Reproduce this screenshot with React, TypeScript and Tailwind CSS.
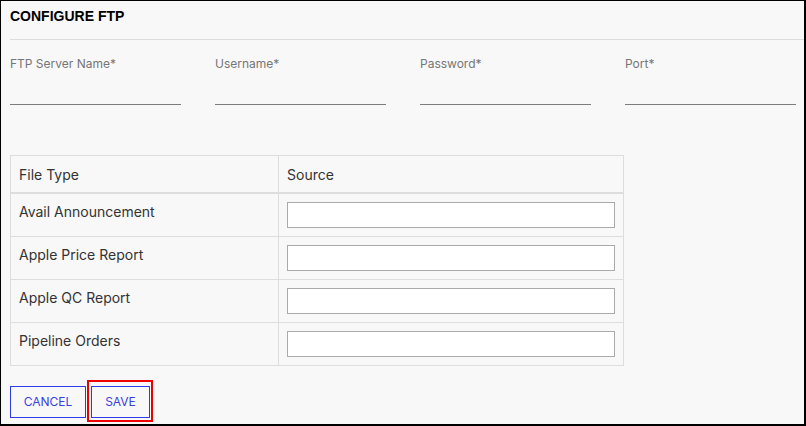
import React from "react";

const fields = ["FTP Server Name*", "Username*", "Password*", "Port*"];

const fileTypes = [
  "Avail Announcement",
  "Apple Price Report",
  "Apple QC Report",
  "Pipeline Orders",
];

export default function App() {
  return (
    <div className="w-[806px] h-[426px] bg-[#f8f8f8] border-t border-l border-r-2 border-b-2 border-black font-['Inter',sans-serif] flex flex-col">
      {/* Title */}
      <div className="h-[38px] pl-[9px] pt-[7px]">
        <h1 className="font-['Liberation_Sans',Arial,sans-serif] font-bold text-[14px] leading-[16px] text-black">
          CONFIGURE FTP
        </h1>
      </div>
      <div className="ml-[9px] border-b border-[#dcdcdc]" />

      {/* Connection fields */}
      <div className="ml-[9px] mt-[16px] w-[786px] grid grid-cols-4 gap-x-[34px]">
        {fields.map((label) => (
          <div key={label} className="flex flex-col">
            <label className="text-[12px] leading-[16px] text-[#767676]">{label}</label>
            <input
              type="text"
              className="h-[33px] w-full bg-transparent border-b border-[#7c7c7c] outline-none text-[13px]"
            />
          </div>
        ))}
      </div>

      {/* File type table */}
      <div className="ml-[9px] mt-[50px] w-[614px] border border-[#dddddd] text-[14px] text-[#333333]">
        <div className="h-[38px] flex border-b-2 border-[#dddddd]">
          <div className="w-[268px] border-r border-[#dddddd] pl-2 flex items-center">File Type</div>
          <div className="flex-1 pl-2 flex items-center">Source</div>
        </div>
        {fileTypes.map((type) => (
          <div
            key={type}
            className="h-[43px] flex border-b border-[#dddddd] last:border-b-0 last:h-[42px]"
          >
            <div className="w-[268px] border-r border-[#dddddd] pl-2 pt-[8px] leading-[20px]">
              {type}
            </div>
            <div className="flex-1 pl-2 pt-[8px]">
              <input
                type="text"
                className="w-[328px] h-[26px] bg-white border border-[#aaaaaa] outline-none px-1 text-[13px]"
              />
            </div>
          </div>
        ))}
      </div>

      {/* Actions */}
      <div className="ml-[9px] mt-[14px] flex items-start gap-[1px]">
        <button className="mt-[6px] w-[76px] h-[32px] border border-[#2f3be6] text-[#3b3fe0] text-[12px] leading-none uppercase">
          Cancel
        </button>
        <div className="border-2 border-[#ee0000] pl-[2px] pr-[1px] pt-[4px] pb-[2px]">
          <button className="w-[59px] h-[32px] border border-[#2f3be6] text-[#3b3fe0] text-[12px] leading-none uppercase">
            Save
          </button>
        </div>
      </div>
    </div>
  );
}
